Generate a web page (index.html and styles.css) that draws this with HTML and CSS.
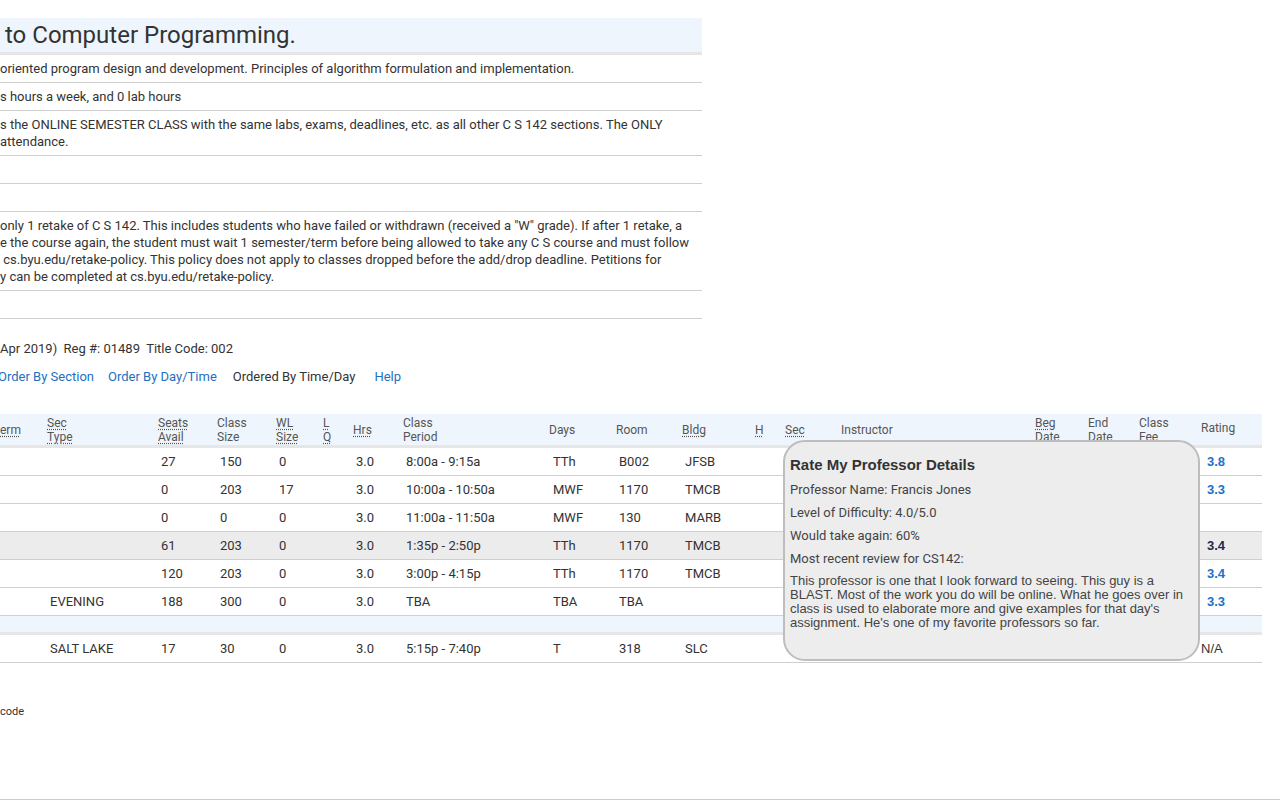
FILE: index.html
```html
<!DOCTYPE html>
<html lang="en">
<head>
<meta charset="utf-8">
<title>C S 142 - Introduction to Computer Programming</title>
<link rel="stylesheet" href="styles.css">
</head>
<body>
<div class="page">
  <section class="course">
    <h1 class="course-title">to Computer Programming.</h1>
    <table class="desc">
      <tr><td>oriented program design and development. Principles of algorithm formulation and implementation.</td></tr>
      <tr><td>s hours a week, and 0 lab hours</td></tr>
      <tr><td>s the ONLINE SEMESTER CLASS with the same labs, exams, deadlines, etc. as all other C S 142 sections. The ONLY<br>attendance.</td></tr>
      <tr><td>&nbsp;</td></tr>
      <tr><td>&nbsp;</td></tr>
      <tr><td>only 1 retake of C S 142. This includes students who have failed or withdrawn (received a "W" grade). If after 1 retake, a<br>e the course again, the student must wait 1 semester/term before being allowed to take any C S course and must follow<br>&nbsp;cs.byu.edu/retake-policy. This policy does not apply to classes dropped before the add/drop deadline. Petitions for<br>y can be completed at cs.byu.edu/retake-policy.</td></tr>
      <tr><td>&nbsp;</td></tr>
    </table>
  </section>

  <p class="reg">Apr 2019)&nbsp; Reg #: 01489&nbsp; Title Code: 002</p>

  <nav class="order-links">
    <a class="link first" href="#">Order By Section</a>
    <a class="link" href="#">Order By Day/Time</a>
    <span class="current">Ordered By Time/Day</span>
    <a class="link help" href="#">Help</a>
  </nav>

  <div class="sections-wrap">
    <table class="sections">
      <colgroup>
        <col class="w47"><col class="w111"><col class="w59"><col class="w59"><col class="w47"><col class="w30"><col class="w50"><col class="w146"><col class="w67"><col class="w66"><col class="w73"><col class="w30"><col class="w56"><col class="w194"><col class="w53"><col class="w51"><col class="w62"><col class="w61">
      </colgroup>
      <thead>
        <tr>
          <th><abbr>erm</abbr></th>
          <th><abbr>Sec</abbr><br><abbr>Type</abbr></th>
          <th><abbr>Seats</abbr><br><abbr>Avail</abbr></th>
          <th>Class<br>Size</th>
          <th><abbr>WL</abbr><br><abbr>Size</abbr></th>
          <th><abbr>L</abbr><br><abbr>Q</abbr></th>
          <th><abbr>Hrs</abbr></th>
          <th>Class<br>Period</th>
          <th>Days</th>
          <th>Room</th>
          <th><abbr>Bldg</abbr></th>
          <th><abbr>H</abbr></th>
          <th><abbr>Sec</abbr></th>
          <th>Instructor</th>
          <th><abbr>Beg</abbr><br>Date</th>
          <th>End<br>Date</th>
          <th>Class<br>Fee</th>
          <th class="th-rating">Rating</th>
        </tr>
      </thead>
      <tbody>
        <tr>
          <td></td><td></td><td>27</td><td>150</td><td>0</td><td></td><td>3.0</td><td>8:00a - 9:15a</td><td class="days">TTh</td><td>B002</td><td>JFSB</td><td></td><td></td><td></td><td></td><td></td><td></td><td><a class="rating" href="#">3.8</a></td>
        </tr>
        <tr>
          <td></td><td></td><td>0</td><td>203</td><td>17</td><td></td><td>3.0</td><td>10:00a - 10:50a</td><td class="days">MWF</td><td>1170</td><td>TMCB</td><td></td><td></td><td></td><td></td><td></td><td></td><td><a class="rating" href="#">3.3</a></td>
        </tr>
        <tr>
          <td></td><td></td><td>0</td><td>0</td><td>0</td><td></td><td>3.0</td><td>11:00a - 11:50a</td><td class="days">MWF</td><td>130</td><td>MARB</td><td></td><td></td><td></td><td></td><td></td><td></td><td></td>
        </tr>
        <tr class="hover">
          <td></td><td></td><td>61</td><td>203</td><td>0</td><td></td><td>3.0</td><td>1:35p - 2:50p</td><td class="days">TTh</td><td>1170</td><td>TMCB</td><td></td><td></td><td></td><td></td><td></td><td></td><td><a class="rating active" href="#">3.4</a></td>
        </tr>
        <tr>
          <td></td><td></td><td>120</td><td>203</td><td>0</td><td></td><td>3.0</td><td>3:00p - 4:15p</td><td class="days">TTh</td><td>1170</td><td>TMCB</td><td></td><td></td><td></td><td></td><td></td><td></td><td><a class="rating" href="#">3.4</a></td>
        </tr>
        <tr>
          <td></td><td>EVENING</td><td>188</td><td>300</td><td>0</td><td></td><td>3.0</td><td>TBA</td><td class="days">TBA</td><td>TBA</td><td></td><td></td><td></td><td></td><td></td><td></td><td></td><td><a class="rating" href="#">3.3</a></td>
        </tr>
        <tr class="group-row">
          <td colspan="18"></td>
        </tr>
        <tr>
          <td></td><td>SALT LAKE</td><td>17</td><td>30</td><td>0</td><td></td><td>3.0</td><td>5:15p - 7:40p</td><td class="days">T</td><td>318</td><td>SLC</td><td></td><td></td><td></td><td></td><td></td><td></td><td class="na-cell">N/A</td>
        </tr>
      </tbody>
    </table>

    <div class="rmp-tooltip">
      <h3 class="rmp-title">Rate My Professor Details</h3>
      <p class="rmp-line">Professor Name: Francis Jones</p>
      <p class="rmp-line">Level of Difficulty: 4.0/5.0</p>
      <p class="rmp-line">Would take again: 60%</p>
      <p class="rmp-line">Most recent review for CS142:</p>
      <p class="rmp-review">This professor is one that I look forward to seeing. This guy is a BLAST. Most of the work you do will be online. What he goes over in class is used to elaborate more and give examples for that day's assignment. He's one of my favorite professors so far.</p>
    </div>
  </div>

  <p class="legend">code</p>
</div>
<footer class="footer"></footer>
</body>
</html>
```

FILE: styles.css
```css
html, body {
  margin: 0;
  padding: 0;
  background: #fff;
}

body {
  font-family: Roboto, "Liberation Sans", Arial, sans-serif;
  font-size: 13px;
  line-height: 17px;
  color: #333;
  overflow: hidden;
}

.page {
  padding-top: 18px;
}

/* course description block */
.course {
  width: 702px;
}

.course-title {
  margin: 0;
  background: #eef5fc;
  border-bottom: 3px solid #e6e6e6;
  font-size: 24px;
  font-weight: 400;
  line-height: 34px;
  height: 34px;
  color: #333;
  padding-left: 5px;
  white-space: nowrap;
}

.desc {
  width: 702px;
  border-collapse: separate;
  border-spacing: 0;
}

.desc td {
  padding: 5px 0;
  border-bottom: 1px solid #cfcfcf;
  white-space: nowrap;
  line-height: 17px;
}

.reg {
  margin: 21px 0 0;
  white-space: nowrap;
}

.order-links {
  display: flex;
  gap: 16px;
  margin-top: 11px;
  white-space: nowrap;
}

.link {
  color: #1f6fc1;
  text-decoration: none;
}

.link.first {
  margin-left: -2px;
  margin-right: -2px;
}

.help {
  margin-left: 3px;
}

.current {
  color: #333;
}

/* sections table */
.sections-wrap {
  position: relative;
  margin-top: 29px;
  width: 1262px;
}

.sections {
  width: 1262px;
  table-layout: fixed;
  border-collapse: separate;
  border-spacing: 0;
}

.w47 { width: 47px; }
.w111 { width: 111px; }
.w59 { width: 59px; }
.w30 { width: 30px; }
.w50 { width: 50px; }
.w146 { width: 146px; }
.w67 { width: 67px; }
.w66 { width: 66px; }
.w73 { width: 73px; }
.w56 { width: 56px; }
.w194 { width: 194px; }
.w53 { width: 53px; }
.w51 { width: 51px; }
.w62 { width: 62px; }
.w61 { width: 61px; }

.sections th {
  background: #eef5fc;
  border-bottom: 3px solid #e6e6e6;
  font-size: 12px;
  line-height: 14px;
  font-weight: 400;
  color: #555;
  text-align: left;
  vertical-align: middle;
  padding: 2px 0 1px;
  white-space: nowrap;
}

.sections th.th-rating {
  padding-bottom: 6px;
}

.sections abbr {
  text-decoration: underline dotted;
  text-underline-offset: 2px;
}

.sections td {
  padding: 5px 0 5px 3px;
  line-height: 17px;
  border-bottom: 1px solid #cfcfcf;
  white-space: nowrap;
  overflow: hidden;
}

.sections td.days {
  padding-left: 4px;
}

.sections tr.hover td {
  background: #ececec;
}

.sections tr.group-row td {
  height: 16px;
  padding: 0;
  background: #eef5fc;
  border-bottom: 3px solid #e6e6e6;
}

.rating {
  font-family: "Liberation Sans", Arial, sans-serif;
  font-weight: 700;
  font-size: 13px;
  line-height: 15px;
  color: #1a73c8;
  text-decoration: none;
  padding-left: 3px;
}

.rating.active {
  color: #1d2b50;
}

.sections td.na-cell {
  padding-left: 0;
  font-family: "Liberation Sans", Arial, sans-serif;
}

/* Rate My Professor tooltip */
.rmp-tooltip {
  position: absolute;
  left: 783px;
  top: 26px;
  width: 413px;
  height: 217px;
  box-sizing: content-box;
  background: #ededed;
  border: 2px solid #bdbdbd;
  border-radius: 22px;
}

.rmp-title {
  margin: 14px 0 9px 5px;
  font-family: "Liberation Sans", Arial, sans-serif;
  font-weight: 700;
  font-size: 15px;
  line-height: 17px;
  color: #333;
}

.rmp-line {
  margin: 0 0 8px 5px;
  font-size: 13px;
  line-height: 15px;
  color: #444;
}

.rmp-review {
  margin: 0 6px 0 5px;
  font-family: "Liberation Sans", Arial, sans-serif;
  font-size: 13px;
  line-height: 14px;
  color: #444;
}

.legend {
  margin: 42px 0 0;
  font-size: 11px;
  line-height: 13px;
  color: #333;
}

.footer {
  margin-top: 81px;
  border-top: 1px solid #cccccc;
  height: 20px;
}
```
